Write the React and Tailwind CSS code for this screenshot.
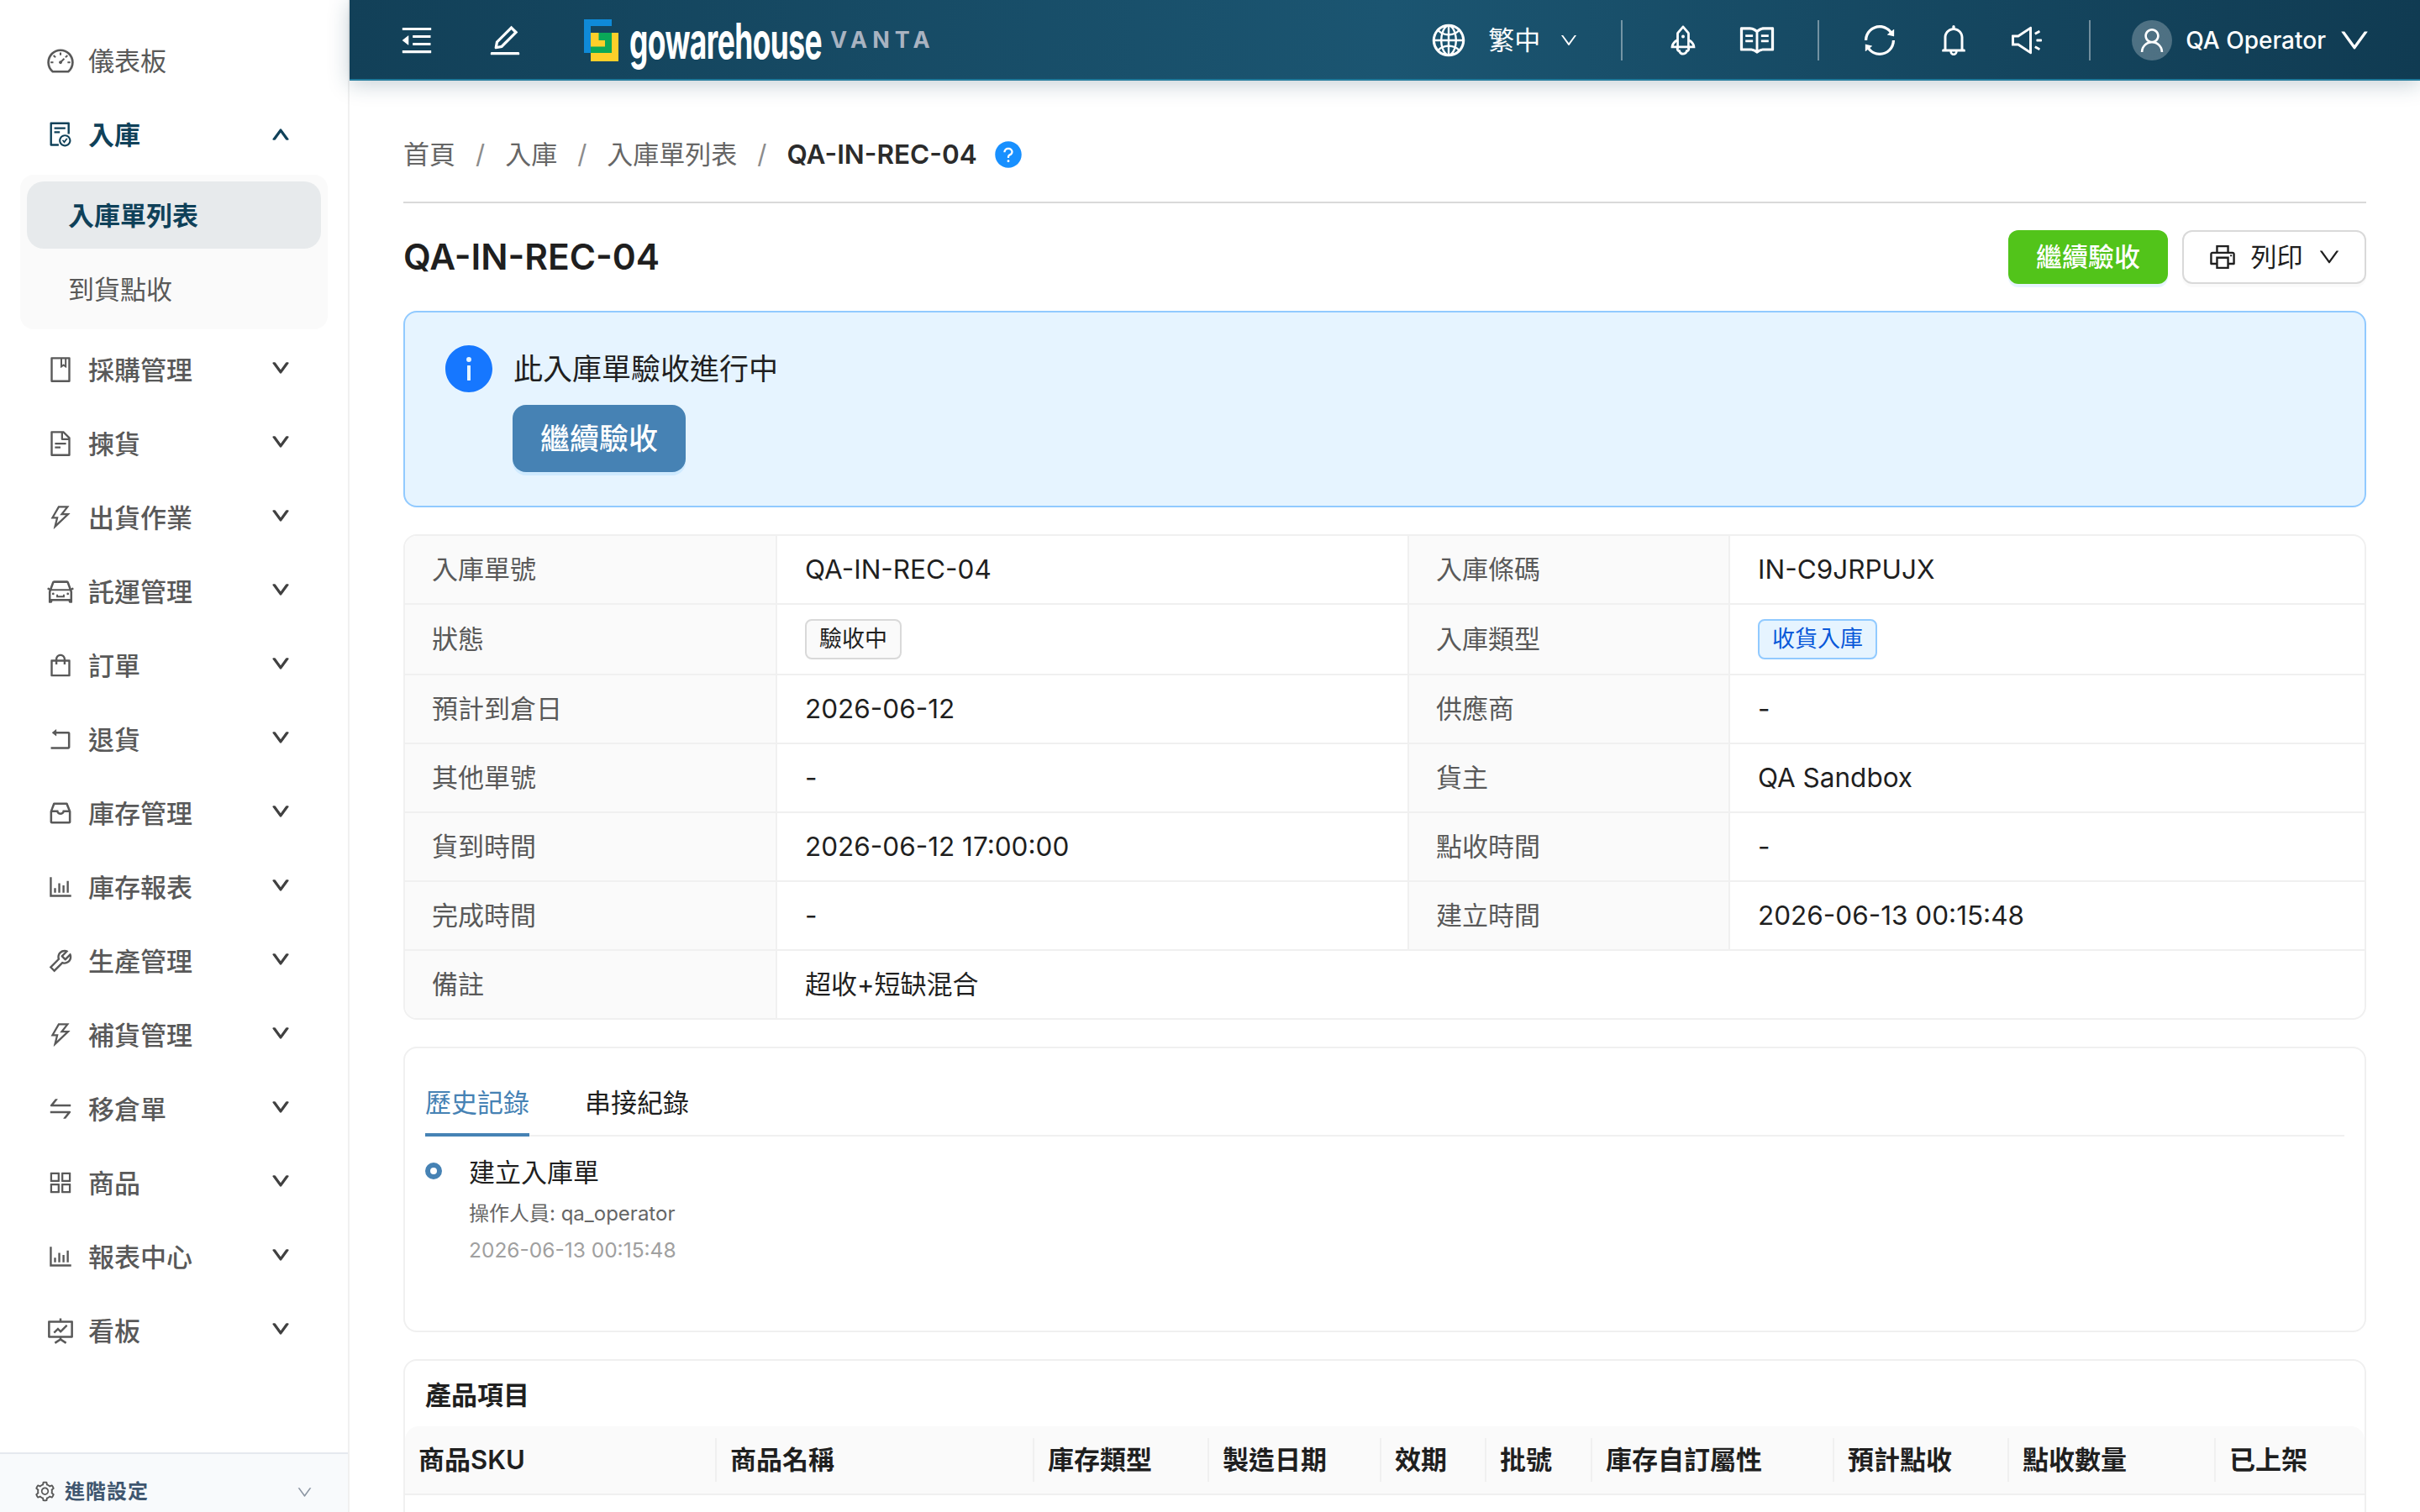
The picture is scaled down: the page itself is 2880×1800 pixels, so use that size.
import React from 'react';
import {
  AiOutlineDashboard, AiOutlineFileDone, AiOutlineBook, AiOutlineFileText, AiOutlineThunderbolt,
  AiOutlineCar, AiOutlineShopping, AiOutlineRollback, AiOutlineInbox, AiOutlineBarChart,
  AiOutlineTool, AiOutlineSwap, AiOutlineAppstore, AiOutlineFundProjectionScreen, AiOutlineSetting,
  AiOutlineDown, AiOutlineUp, AiOutlineMenuFold, AiOutlineEdit, AiOutlineGlobal, AiOutlineRocket,
  AiOutlineRead, AiOutlineSync, AiOutlineBell, AiOutlineSound, AiOutlineUser, AiOutlinePrinter,
  AiFillQuestionCircle, AiFillInfoCircle,
} from 'react-icons/ai';

const NAV_ITEMS = [
  { label: '採購管理', icon: AiOutlineBook, size: 34 },
  { label: '揀貨', icon: AiOutlineFileText, size: 34 },
  { label: '出貨作業', icon: AiOutlineThunderbolt, size: 34 },
  { label: '託運管理', icon: AiOutlineCar, size: 37 },
  { label: '訂單', icon: AiOutlineShopping, size: 34 },
  { label: '退貨', icon: AiOutlineRollback, size: 34 },
  { label: '庫存管理', icon: AiOutlineInbox, size: 34 },
  { label: '庫存報表', icon: AiOutlineBarChart, size: 34 },
  { label: '生產管理', icon: AiOutlineTool, size: 34 },
  { label: '補貨管理', icon: AiOutlineThunderbolt, size: 34 },
  { label: '移倉單', icon: AiOutlineSwap, size: 34 },
  { label: '商品', icon: AiOutlineAppstore, size: 34 },
  { label: '報表中心', icon: AiOutlineBarChart, size: 34 },
  { label: '看板', icon: AiOutlineFundProjectionScreen, size: 37 },
];

const DETAIL_ROWS = [
  ['入庫單號', 'QA-IN-REC-04', '入庫條碼', 'IN-C9JRPUJX'],
  ['狀態', 'status', '入庫類型', 'type'],
  ['預計到倉日', '2026-06-12', '供應商', '-'],
  ['其他單號', '-', '貨主', 'QA Sandbox'],
  ['貨到時間', '2026-06-12 17:00:00', '點收時間', '-'],
  ['完成時間', '-', '建立時間', '2026-06-13 00:15:48'],
];

const COLUMNS = ['商品SKU', '商品名稱', '庫存類型', '製造日期', '效期', '批號', '庫存自訂屬性', '預計點收', '點收數量', '已上架'];

function Logo() {
  return (
    <svg width="41" height="50" viewBox="0 0 41 50">
      <rect x="8" y="16" width="33" height="34" fill="#fccf2a" />
      <path d="M17.5 16H33V40H8V32.5H25V25H17.5Z" fill="#0aa858" />
      <path d="M0 0H33V8H8V40H0Z" fill="#0f8ad8" />
    </svg>
  );
}

function Sidebar() {
  return (
    <aside className="flex w-[416px] h-full flex-none flex-col border-r-2 border-[#f0f0f0] bg-white text-[31px] text-[#595959]">
      <nav className="flex-1 pt-8">
        <div className="h-20 flex items-center pl-[54px] gap-[15px]">
          <span className="w-9 flex justify-center"><AiOutlineDashboard size={37} /></span>
          <span className="pt-[2px]">儀表板</span>
        </div>
        <div className="mt-2 h-20 flex items-center pl-[54px] gap-[15px] font-bold text-[#0f4159]">
          <span className="w-9 flex justify-center"><AiOutlineFileDone size={34} /></span>
          <span className="flex-1 pt-[2px]">入庫</span>
          <AiOutlineUp size={24} className="mr-[68px] stroke-[60px]" />
        </div>
        <div className="mx-6 mt-2 w-[366px] h-[184px] p-2 rounded-2xl bg-[#fafafa]">
          <div className="h-20 flex items-center pl-[49px] pt-[2px] rounded-[20px] bg-[#e7eaec] font-bold text-[#0f4159]">入庫單列表</div>
          <div className="mt-2 h-20 flex items-center pl-[49px] pt-[2px]">到貨點收</div>
        </div>
        {NAV_ITEMS.map(({ label, icon: Icon, size }) => (
          <div key={label} className="mt-2 h-20 flex items-center pl-[54px] gap-[15px] font-medium">
            <span className="w-9 flex justify-center"><Icon size={size} /></span>
            <span className="flex-1 pt-[2px]">{label}</span>
            <AiOutlineDown size={24} className="mr-[68px] -mt-1 text-[#404040] stroke-[60px]" />
          </div>
        ))}
      </nav>
      <div className="h-[71px] flex items-start pt-[27px] pl-10 border-t-2 border-[#e5e9ef] bg-[#f8fafc] text-[24px] leading-9 font-bold text-[#3f566f]">
        <AiOutlineSetting size={27} className="mt-1 text-[#595959]" />
        <span className="ml-[10px] flex-1 tracking-[1px]">進階設定</span>
        <AiOutlineDown size={21} className="mt-2 mr-[41px] text-[#8c96a3]" />
      </div>
    </aside>
  );
}

function Header() {
  return (
    <header className="relative z-10 h-[96px] flex-none flex items-center pt-[2px] border-b-2 border-[#217a9b] bg-[linear-gradient(90deg,#124058,#1b5571_50%,#103b52)] text-white shadow-[0_4px_24px_rgba(18,64,88,0.25)]">
      <AiOutlineMenuFold size={44} className="ml-[58px]" />
      <AiOutlineEdit size={44} className="ml-[61px]" />
      <div className="ml-[72px] flex items-center">
        <Logo />
        <div className="ml-[13px] w-[226px] h-[64px] flex items-center">
          <span className="origin-left [transform:scaleX(0.6)] text-[59px] leading-none font-bold tracking-[-1px]">gowarehouse</span>
        </div>
        <span className="ml-[13px] text-[27px] font-bold tracking-[6px] text-[#a9b3c1]">VANTA</span>
      </div>
      <div className="ml-auto flex items-center">
        <AiOutlineGlobal size={44} />
        <span className="ml-[25px] text-[31px]">繁中</span>
        <AiOutlineDown size={24} className="ml-[22px]" />
        <div className="ml-[50px] w-[2px] h-12 bg-white/40" />
        <AiOutlineRocket size={42} className="ml-[51px]" />
        <AiOutlineRead size={46} className="ml-[44px]" />
        <div className="ml-[49px] w-[2px] h-12 bg-white/40" />
        <AiOutlineSync size={44} className="ml-[50px]" />
        <AiOutlineBell size={42} className="ml-[45px]" />
        <AiOutlineSound size={42} className="ml-[45px]" />
        <div className="ml-[53px] w-[2px] h-12 bg-white/40" />
        <div className="ml-[49px] w-12 h-12 rounded-full bg-white/25 flex items-center justify-center">
          <AiOutlineUser size={36} />
        </div>
        <span className="ml-[16px] text-[28px] font-medium">QA Operator</span>
        <AiOutlineDown size={42} className="ml-[13px] mr-[57px]" />
      </div>
    </header>
  );
}

function Tag({ blue, children }) {
  return (
    <span className={`h-12 px-[15px] inline-flex items-center rounded-lg border-2 text-[27px] ${blue ? 'border-[#91caff] bg-[#e6f4ff] text-[#0958d9]' : 'border-[#d9d9d9] bg-[#fafafa] text-[#1f1f1f]'}`}>
      {children}
    </span>
  );
}

function DetailValue({ value }) {
  if (value === 'status') return <Tag>驗收中</Tag>;
  if (value === 'type') return <Tag blue>收貨入庫</Tag>;
  return value;
}

function DetailTable() {
  return (
    <div className="mt-8 rounded-2xl border-2 border-[#f0f0f0] overflow-hidden text-[31.5px] text-[#1f1f1f]">
      {DETAIL_ROWS.map(([l1, v1, l2, v2], i) => (
        <div key={l1} className={`grid grid-cols-[443px_752px_382px_1fr] border-[#f0f0f0] ${i > 0 ? 'border-t-2' : ''}`}>
          <div className={`${i === 1 ? 'h-[82px]' : 'h-20'} flex items-center pl-8 bg-[#fafafa] border-r-2 border-[#f0f0f0] text-[31px] text-[#595959]`}>{l1}</div>
          <div className="flex items-center pl-[33px] border-r-2 border-[#f0f0f0]"><DetailValue value={v1} /></div>
          <div className="flex items-center pl-8 bg-[#fafafa] border-r-2 border-[#f0f0f0] text-[31px] text-[#595959]">{l2}</div>
          <div className="flex items-center pl-[33px]"><DetailValue value={v2} /></div>
        </div>
      ))}
      <div className="grid grid-cols-[443px_1fr] border-t-2 border-[#f0f0f0]">
        <div className="h-20 flex items-center pl-8 bg-[#fafafa] border-r-2 border-[#f0f0f0] text-[31px] text-[#595959]">備註</div>
        <div className="flex items-center pl-[33px] text-[31px]">超收+短缺混合</div>
      </div>
    </div>
  );
}

function History() {
  return (
    <section className="mt-8 h-[340px] rounded-2xl border-2 border-[#f0f0f0] px-6 pt-6">
      <div className="flex gap-[66px] border-b-2 border-[#f0f0f0] text-[31px] leading-12">
        <div className="-mb-[2px] pt-[17px] pb-3 border-b-4 border-[#4682b4] text-[#4682b4]">歷史記錄</div>
        <div className="-mb-[2px] pt-[17px] pb-3 border-b-4 border-transparent text-[#1f1f1f]">串接紀錄</div>
      </div>
      <div className="mt-[19px] flex">
        <div className="mt-3 w-5 h-5 flex-none rounded-full border-[6px] border-[#4682b4] bg-white" />
        <div className="ml-[32px]">
          <div className="text-[31px] leading-12 text-[#1f1f1f]">建立入庫單</div>
          <div className="mt-[7px] text-[24px] leading-9 text-[#666666]">操作人員: qa_operator</div>
          <div className="mt-[7px] text-[24.5px] leading-9 text-[#a0a0a0]">2026-06-13 00:15:48</div>
        </div>
      </div>
    </section>
  );
}

function Products() {
  return (
    <section className="mt-8 rounded-t-2xl border-2 border-[#f0f0f0] h-[300px]">
      <div className="px-6 pt-[17px] pb-[13px] text-[31px] leading-12 font-semibold text-[#1f1f1f]">產品項目</div>
      <div className="h-[82px] grid grid-cols-[371px_378px_208px_205px_125px_126px_288px_208px_246px_177px] items-center rounded-t-2xl border-b-2 border-[#f0f0f0] bg-[#fafafa] text-[31px] font-semibold text-[#1f1f1f]">
        {COLUMNS.map((c, i) => (
          <div key={c} className={`h-[52px] flex items-center pl-4 border-[#f0f0f0] ${i < COLUMNS.length - 1 ? 'border-r-2' : ''}`}>{c}</div>
        ))}
      </div>
    </section>
  );
}

export default function App() {
  return (
    <div className="flex h-screen w-screen overflow-hidden bg-white font-['Inter','Noto_Sans_CJK_TC',sans-serif]">
      <Sidebar />
      <div className="flex min-w-0 flex-1 flex-col">
        <Header />
        <main className="flex-1 overflow-hidden px-16 pt-16">
          <div className="h-12 flex items-center text-[31px] text-[#666666]">
            <span>首頁</span>
            <span className="mx-[24px] text-[#8c8c8c]">/</span>
            <span>入庫</span>
            <span className="mx-[24px] text-[#8c8c8c]">/</span>
            <span>入庫單列表</span>
            <span className="mx-[24px] text-[#8c8c8c]">/</span>
            <span className="text-[31.5px] font-semibold text-[#2b2b2b]">QA-IN-REC-04</span>
            <AiFillQuestionCircle size={36} className="ml-[19px] text-[#1890ff]" />
          </div>
          <div className="mt-8 h-[2px] bg-[#d9d9d9]" />
          <div className="mt-8 flex items-center">
            <h1 className="flex-1 text-[42.5px] font-semibold text-[#1f1f1f]">QA-IN-REC-04</h1>
            <button className="w-[190px] h-16 rounded-xl bg-[#52c41a] text-[31px] font-medium text-white shadow-[0_4px_0_rgba(5,145,255,0.1)]">繼續驗收</button>
            <button className="ml-[17px] w-[219px] h-16 flex items-center justify-center rounded-xl border-2 border-[#d9d9d9] bg-white text-[31px] text-[#1f1f1f] shadow-[0_4px_0_rgba(0,0,0,0.02)]">
              <AiOutlinePrinter size={36} />
              <span className="ml-[16px]">列印</span>
              <AiOutlineDown size={30} className="ml-[16px]" />
            </button>
          </div>
          <div className="mt-8 h-[234px] rounded-2xl border-2 border-[#91caff] bg-[#e6f4ff] pl-12 pt-[39px]">
            <div className="h-14 flex items-center">
              <AiFillInfoCircle size={64} className="-ml-1 text-[#1677ff]" />
              <span className="ml-[21px] text-[35px] text-[#1f1f1f]">此入庫單驗收進行中</span>
            </div>
            <button className="ml-[80px] mt-[15px] w-[206px] h-20 rounded-2xl bg-[#4682b4] text-[35px] font-medium text-white shadow-[0_4px_0_rgba(5,145,255,0.1)]">繼續驗收</button>
          </div>
          <DetailTable />
          <History />
          <Products />
        </main>
      </div>
    </div>
  );
}
